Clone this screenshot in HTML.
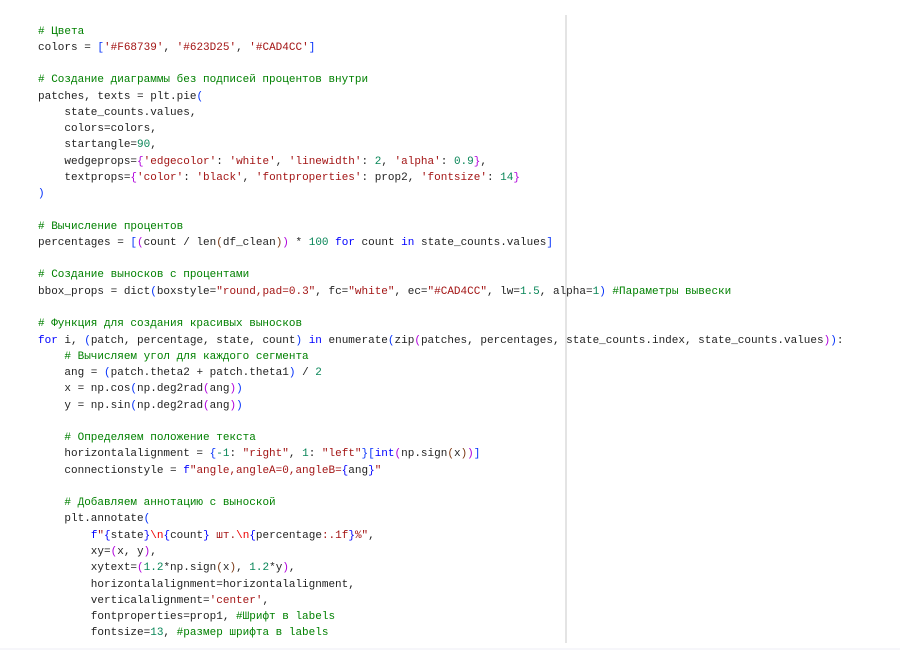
<!DOCTYPE html>
<html><head><meta charset="utf-8"><style>
html,body{margin:0;padding:0;background:#fff;width:900px;height:667px;overflow:hidden;position:relative}
pre{position:absolute;left:38px;top:23.5px;margin:0;font-family:"Liberation Mono",monospace;font-size:11px;line-height:16.27px;color:#1f1f1f;white-space:pre}
.c{color:#008000}.s{color:#a31515}.k{color:#0000ff}.n{color:#098658}.b1{color:#0431fa}.b2{color:#319331}.b3{color:#7b3814}.p{color:#af00db}.e{color:#ee0000}
.vl{position:absolute;left:565px;top:15px;width:2px;height:628px;background:#e4e4e4}
.hl{position:absolute;left:0;top:648px;width:900px;height:2px;background:#f6f6fa}
</style></head><body>
<div class="vl"></div><div class="hl"></div>
<pre><span class="c"># Цвета</span>
colors = <span class="b1">[</span><span class="s">'#F68739'</span>, <span class="s">'#623D25'</span>, <span class="s">'#CAD4CC'</span><span class="b1">]</span>

<span class="c"># Создание диаграммы без подписей процентов внутри</span>
patches, texts = plt.pie<span class="b1">(</span>
    state_counts.values,
    colors=colors,
    startangle=<span class="n">90</span>,
    wedgeprops=<span class="p">{</span><span class="s">'edgecolor'</span>: <span class="s">'white'</span>, <span class="s">'linewidth'</span>: <span class="n">2</span>, <span class="s">'alpha'</span>: <span class="n">0.9</span><span class="p">}</span>,
    textprops=<span class="p">{</span><span class="s">'color'</span>: <span class="s">'black'</span>, <span class="s">'fontproperties'</span>: prop2, <span class="s">'fontsize'</span>: <span class="n">14</span><span class="p">}</span>
<span class="b1">)</span>

<span class="c"># Вычисление процентов</span>
percentages = <span class="b1">[</span><span class="p">(</span>count / len<span class="b3">(</span>df_clean<span class="b3">)</span><span class="p">)</span> * <span class="n">100</span> <span class="k">for</span> count <span class="k">in</span> state_counts.values<span class="b1">]</span>

<span class="c"># Создание выносков с процентами</span>
bbox_props = dict<span class="b1">(</span>boxstyle=<span class="s">"round,pad=0.3"</span>, fc=<span class="s">"white"</span>, ec=<span class="s">"#CAD4CC"</span>, lw=<span class="n">1.5</span>, alpha=<span class="n">1</span><span class="b1">)</span> <span class="c">#Параметры вывески</span>

<span class="c"># Функция для создания красивых выносков</span>
<span class="k">for</span> i, <span class="b1">(</span>patch, percentage, state, count<span class="b1">)</span> <span class="k">in</span> enumerate<span class="b1">(</span>zip<span class="p">(</span>patches, percentages, state_counts.index, state_counts.values<span class="p">)</span><span class="b1">)</span>:
    <span class="c"># Вычисляем угол для каждого сегмента</span>
    ang = <span class="b1">(</span>patch.theta2 + patch.theta1<span class="b1">)</span> / <span class="n">2</span>
    x = np.cos<span class="b1">(</span>np.deg2rad<span class="p">(</span>ang<span class="p">)</span><span class="b1">)</span>
    y = np.sin<span class="b1">(</span>np.deg2rad<span class="p">(</span>ang<span class="p">)</span><span class="b1">)</span>

    <span class="c"># Определяем положение текста</span>
    horizontalalignment = <span class="b1">{</span><span class="n">-1</span>: <span class="s">"right"</span>, <span class="n">1</span>: <span class="s">"left"</span><span class="b1">}[</span><span class="k">int</span><span class="p">(</span>np.sign<span class="b3">(</span>x<span class="b3">)</span><span class="p">)</span><span class="b1">]</span>
    connectionstyle = <span class="k">f</span><span class="s">"angle,angleA=0,angleB=</span><span class="k">{</span>ang<span class="k">}</span><span class="s">"</span>

    <span class="c"># Добавляем аннотацию с выноской</span>
    plt.annotate<span class="b1">(</span>
        <span class="k">f</span><span class="s">"</span><span class="k">{</span>state<span class="k">}</span><span class="e">\n</span><span class="k">{</span>count<span class="k">}</span><span class="s"> шт.</span><span class="e">\n</span><span class="k">{</span>percentage<span class="s">:.1f</span><span class="k">}</span><span class="s">%"</span>,
        xy=<span class="p">(</span>x, y<span class="p">)</span>,
        xytext=<span class="p">(</span><span class="n">1.2</span>*np.sign<span class="b3">(</span>x<span class="b3">)</span>, <span class="n">1.2</span>*y<span class="p">)</span>,
        horizontalalignment=horizontalalignment,
        verticalalignment=<span class="s">'center'</span>,
        fontproperties=prop1, <span class="c">#Шрифт в labels</span>
        fontsize=<span class="n">13</span>, <span class="c">#размер шрифта в labels</span></pre>
</body></html>
